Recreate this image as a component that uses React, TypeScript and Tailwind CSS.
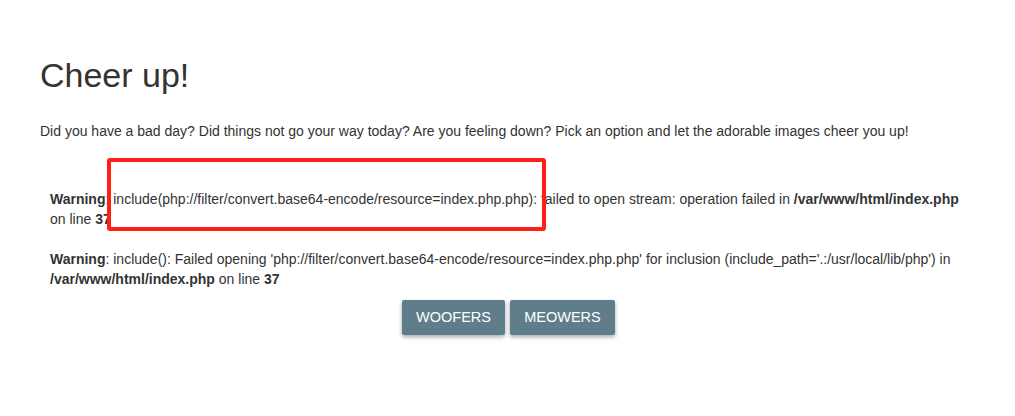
import React from "react";

export default function App() {
  return (
    <div
      className="relative w-[1015px] h-[416px] bg-white text-[#333333]"
      style={{ fontFamily: '"Liberation Sans", Arial, Helvetica, sans-serif' }}
    >
      <div className="px-[40px] pt-[55px]">
        <h1 className="text-[34px] leading-[40px] font-normal m-0">Cheer up!</h1>
        <p className="text-[14px] leading-[20px] mt-[26px]">
          Did you have a bad day? Did things not go your way today? Are you feeling down? Pick an option and let the adorable images cheer you up!
        </p>
        <div className="text-[14px] leading-[20px] px-[10px] mt-[48px]">
          <div>
            <b>Warning</b>: include(php://filter/convert.base64-encode/resource=index.php.php): failed to open stream: operation failed in <b>/var/www/html/index.php</b> on line <b>37</b>
          </div>
          <div className="mt-[20px]">
            <b>Warning</b>: include(): Failed opening 'php://filter/convert.base64-encode/resource=index.php.php' for inclusion (include_path='.:/usr/local/lib/php') in <b>/var/www/html/index.php</b> on line <b>37</b>
          </div>
        </div>
        <div className="flex justify-center gap-[5px] mt-[11px] pl-[2px]">
          <button className="h-[35px] w-[103px] bg-[#607d8b] text-white text-[14.5px] uppercase rounded-[2px] shadow-[0_2px_4px_rgba(0,0,0,0.35)]">
            Woofers
          </button>
          <button className="h-[35px] w-[105px] bg-[#607d8b] text-white text-[14.5px] uppercase rounded-[2px] shadow-[0_2px_4px_rgba(0,0,0,0.35)]">
            Meowers
          </button>
        </div>
      </div>
      <div className="absolute left-[107px] top-[158px] w-[439px] h-[73px] border-[4px] border-[#ff1f14] rounded-[3px]" />
    </div>
  );
}
